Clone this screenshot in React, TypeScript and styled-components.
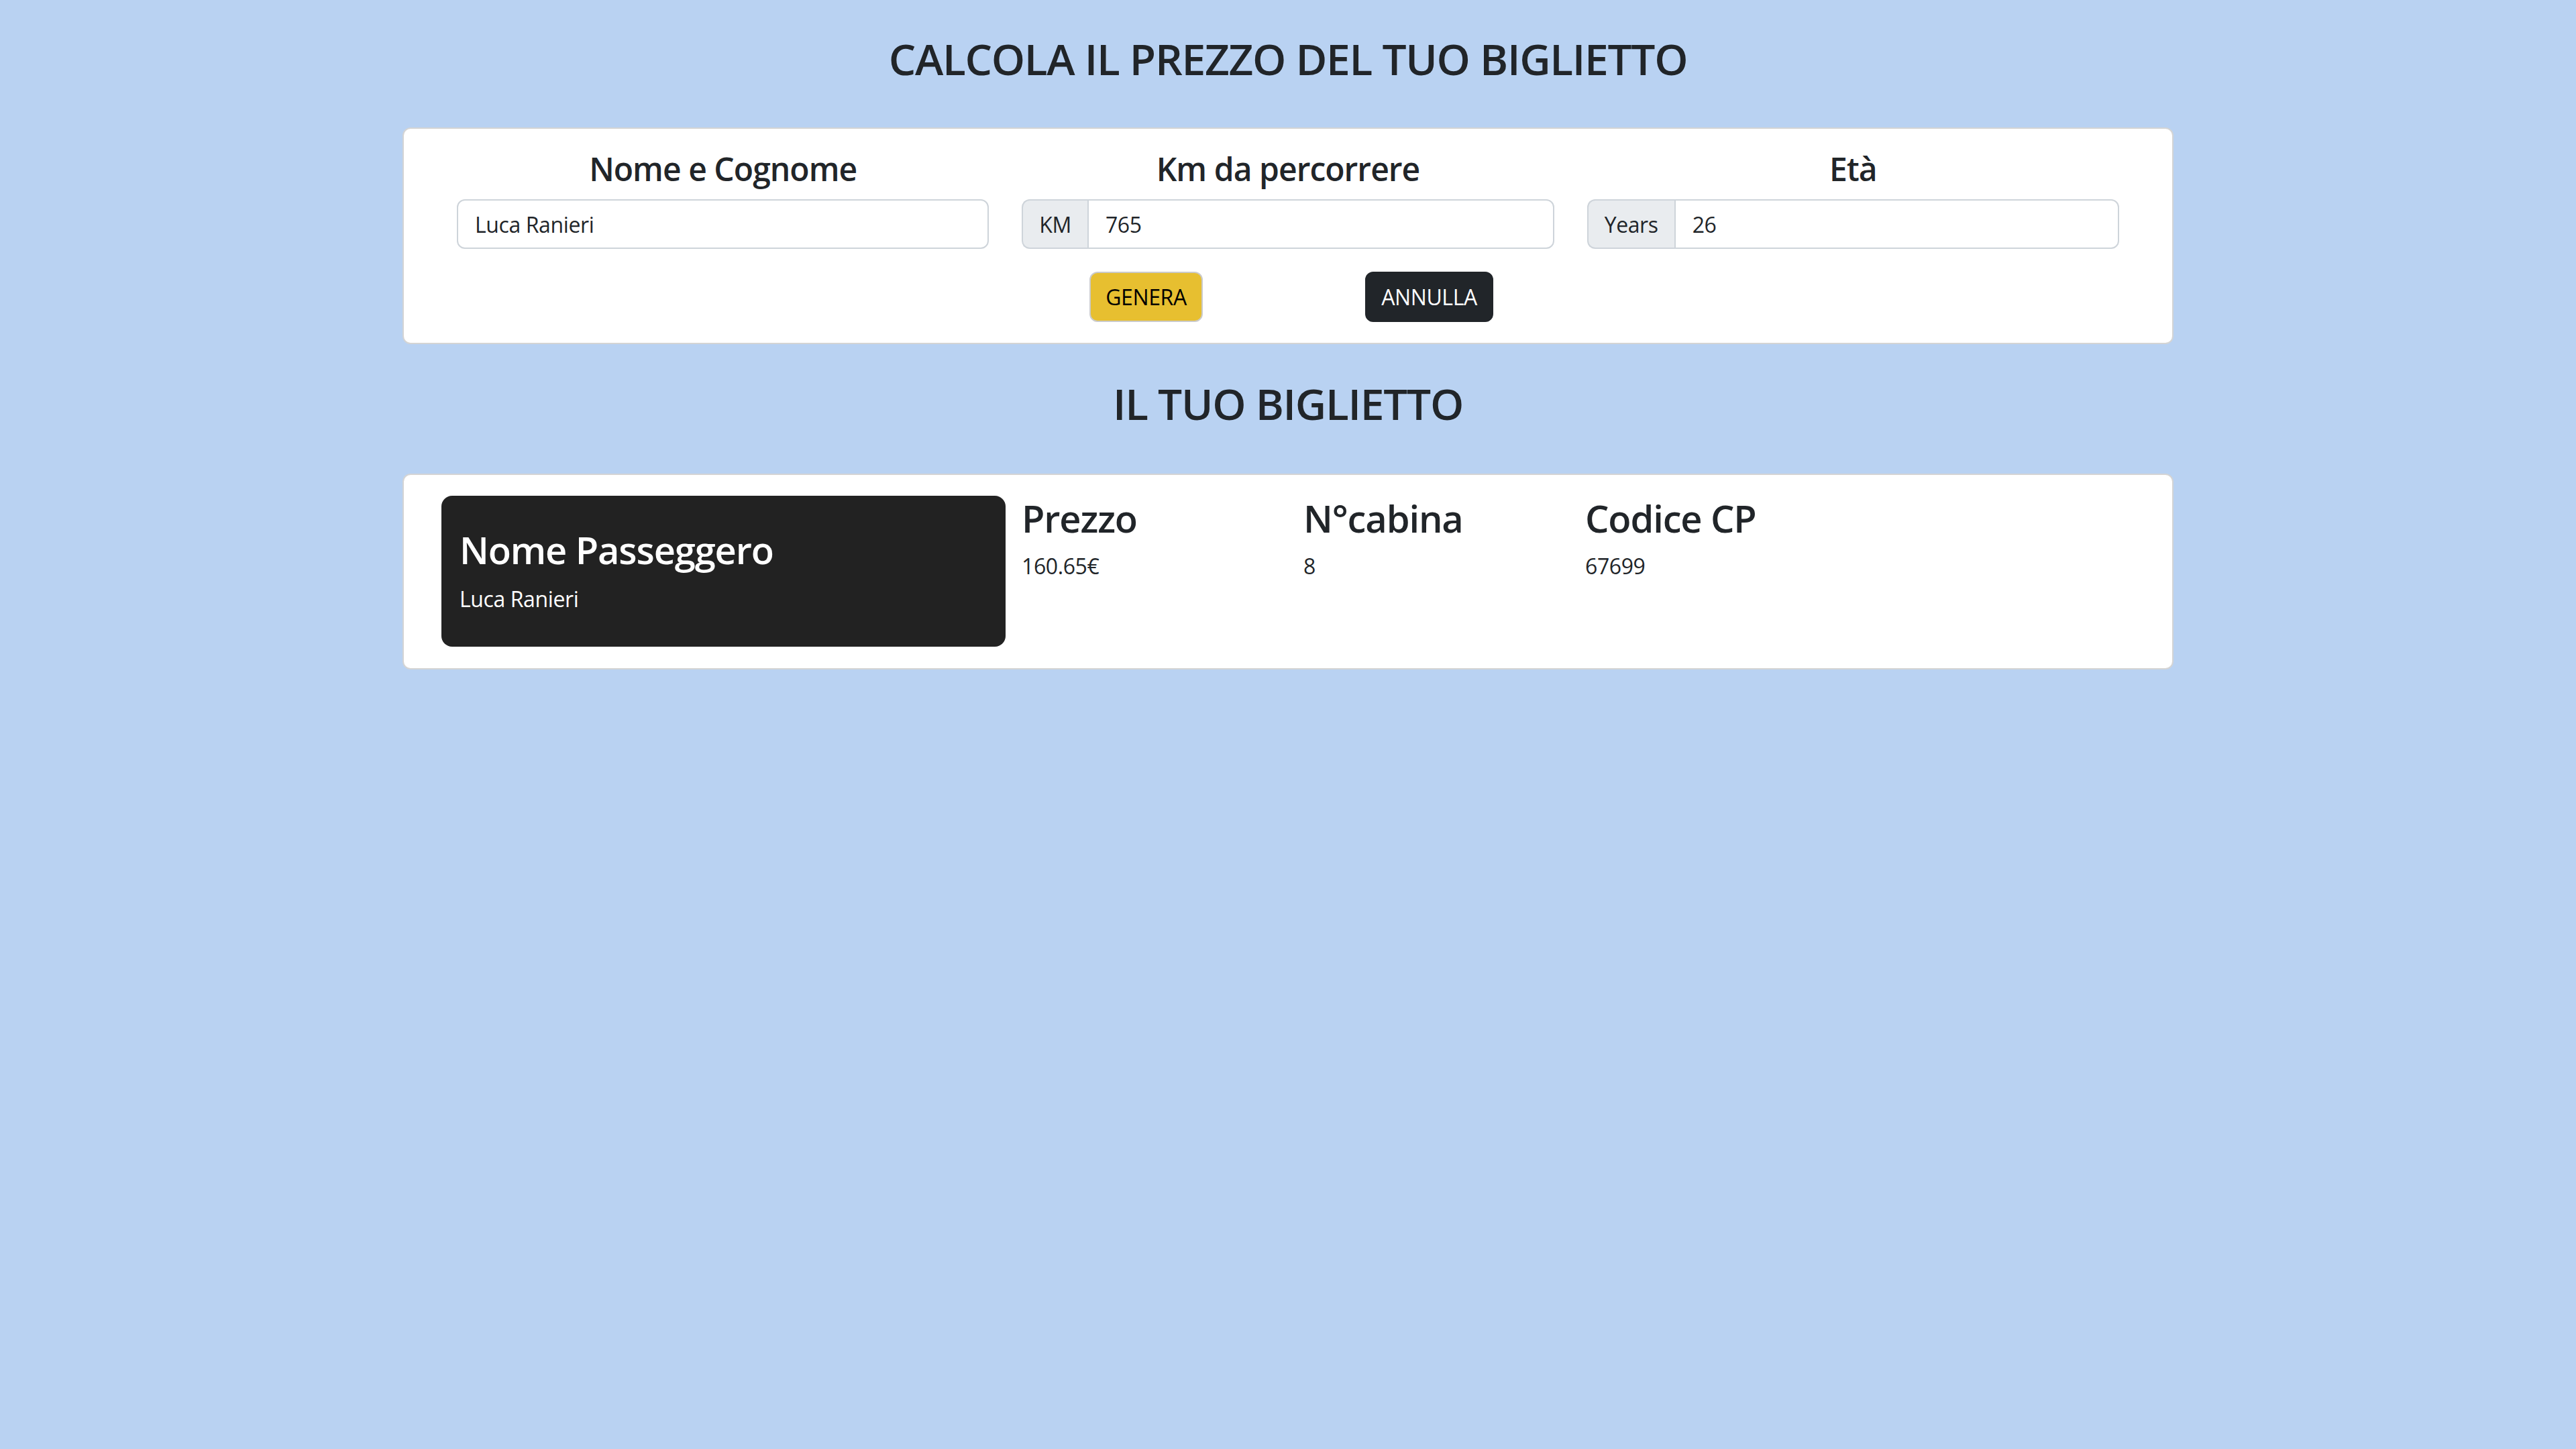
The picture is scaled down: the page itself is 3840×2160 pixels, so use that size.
import React from 'react';
import styled, { createGlobalStyle } from 'styled-components';

const GlobalStyle = createGlobalStyle`
    body {
        margin: 0;
        background-color: #b9d2f2;
        font-family: "Open Sans", "Noto Sans", sans-serif;
        color: #212529;
        letter-spacing: -0.025em;
    }
    * {
        box-sizing: border-box;
    }
`;

const Page = styled.div`
    min-height: 100vh;
    display: flex;
    flex-direction: column;
    align-items: center;
    padding-top: 50px;
`;

const Heading = styled.h2<{ $mt: number; $mb: number }>`
    margin: ${({ $mt, $mb }) => `${$mt}px 0 ${$mb}px`};
    font-size: 64px;
    font-weight: 600;
    line-height: 1.2;
    letter-spacing: -0.02em;
    text-align: center;
`;

const Card = styled.div`
    width: 2640px;
    background-color: #fff;
    border: 2px solid #d4d4d4;
    border-radius: 12px;
`;

const FormCard = styled(Card)`
    padding: 31px 79px 31px;
`;

const Fields = styled.div`
    display: grid;
    grid-template-columns: repeat(3, 1fr);
    column-gap: 49px;
`;

const Field = styled.div`
    display: flex;
    flex-direction: column;
`;

const Label = styled.h4`
    margin: 0 0 17px;
    font-size: 48px;
    font-weight: 600;
    line-height: 1.2;
    letter-spacing: -0.02em;
    text-align: center;
`;

const InputGroup = styled.div`
    display: flex;
    height: 74px;
`;

const Addon = styled.span`
    display: flex;
    align-items: center;
    padding: 0 24px;
    font-size: 32px;
    background-color: #e9ecef;
    border: 2px solid #ced4da;
    border-right: none;
    border-radius: 12px 0 0 12px;
`;

const Input = styled.input<{ $grouped?: boolean }>`
    flex: 1;
    min-width: 0;
    height: 74px;
    padding: 0 25px;
    font-family: inherit;
    font-size: 32px;
    letter-spacing: inherit;
    color: #212529;
    background-color: #fff;
    border: 2px solid #ced4da;
    border-radius: ${({ $grouped }) => ($grouped ? '0 12px 12px 0' : '12px')};
    outline: none;
`;

const Actions = styled.div`
    display: flex;
    justify-content: center;
    gap: 242px;
    margin-top: 34px;
    padding-left: 10px;
`;

const Button = styled.button<{ $variant: 'warning' | 'dark'; $w: number }>`
    width: ${({ $w }) => $w}px;
    height: 75px;
    padding: 0;
    font-family: inherit;
    font-size: 32px;
    letter-spacing: inherit;
    border-radius: 12px;
    cursor: pointer;
    color: ${({ $variant }) => ($variant === 'warning' ? '#000' : '#fff')};
    background-color: ${({ $variant }) => ($variant === 'warning' ? '#e7bf30' : '#212529')};
    border: 2px solid ${({ $variant }) => ($variant === 'warning' ? '#cbcbcb' : '#212529')};
`;

const TicketCard = styled(Card)`
    padding: 31px 56px 32px;
`;

const TicketRow = styled.div`
    display: grid;
    grid-template-columns: 841px repeat(3, 396px);
    column-gap: 24px;
    align-items: start;
`;

const Passenger = styled.div`
    height: 225px;
    display: flex;
    flex-direction: column;
    justify-content: center;
    padding: 0 27px;
    background-color: #222;
    color: #fff;
    border-radius: 16px;
`;

const InfoTitle = styled.h3<{ $mb: number }>`
    margin: 0 0 ${({ $mb }) => $mb}px;
    font-size: 56px;
    font-weight: 600;
    line-height: 1.2;
    letter-spacing: -0.02em;
`;

const Value = styled.p`
    margin: 0;
    font-size: 32px;
    line-height: 1.5;
`;

const Info = styled.div`
    display: flex;
    flex-direction: column;
`;

const info = [
    { title: 'Prezzo', value: '160.65€' },
    { title: 'N°cabina', value: '8' },
    { title: 'Codice CP', value: '67699' },
];

const App = () => {
    return (
        <Page>
            <GlobalStyle />
            <Heading $mt={0} $mb={63}>CALCOLA IL PREZZO DEL TUO BIGLIETTO</Heading>
            <FormCard>
                <Fields>
                    <Field>
                        <Label>Nome e Cognome</Label>
                        <Input defaultValue="Luca Ranieri" />
                    </Field>
                    <Field>
                        <Label>Km da percorrere</Label>
                        <InputGroup>
                            <Addon>KM</Addon>
                            <Input $grouped defaultValue="765" />
                        </InputGroup>
                    </Field>
                    <Field>
                        <Label>Età</Label>
                        <InputGroup>
                            <Addon>Years</Addon>
                            <Input $grouped defaultValue="26" />
                        </InputGroup>
                    </Field>
                </Fields>
                <Actions>
                    <Button $variant="warning" $w={169}>GENERA</Button>
                    <Button $variant="dark" $w={191}>ANNULLA</Button>
                </Actions>
            </FormCard>
            <Heading $mt={51} $mb={65}>IL TUO BIGLIETTO</Heading>
            <TicketCard>
                <TicketRow>
                    <Passenger>
                        <InfoTitle $mb={16}>Nome Passeggero</InfoTitle>
                        <Value>Luca Ranieri</Value>
                    </Passenger>
                    {info.map((item) => (
                        <Info key={item.title}>
                            <InfoTitle $mb={14}>{item.title}</InfoTitle>
                            <Value>{item.value}</Value>
                        </Info>
                    ))}
                </TicketRow>
            </TicketCard>
        </Page>
    );
};

export default App;
